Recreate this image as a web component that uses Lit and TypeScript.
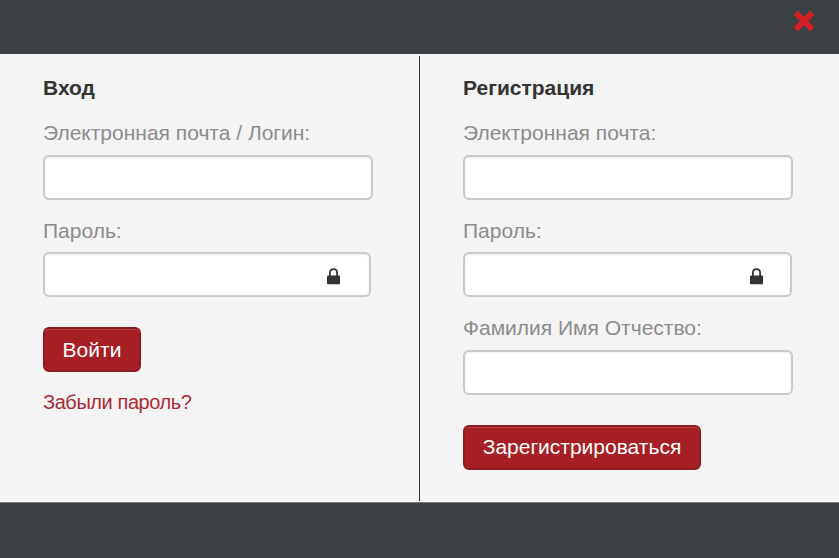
import { LitElement, html, css, svg } from "lit";
import { customElement, property } from "lit/decorators.js";

const lock = html`<svg class="lock" viewBox="0 0 13 17" width="13" height="17">${svg`
  <path d="M2.9 8.4V4.8C2.9 2.6 4.4 1.1 6.5 1.1S10.1 2.6 10.1 4.8V8.4" fill="none" stroke="#333" stroke-width="1.8"/>
  <rect x="0" y="7.4" width="13" height="8.8" rx="1" fill="#333"/>`}</svg>`;

@customElement("form-field")
class FormField extends LitElement {
  @property() label = "";
  @property({ type: Boolean }) secret = false;

  static styles = css`
    :host { display: block; }
    .label { display: block; height: 24px; line-height: 24px; margin-bottom: 10px; color: #8b8b8b; white-space: nowrap; }
    .label.secret { margin-bottom: 9px; }
    .box { display: flex; position: relative; width: 330px; height: 45px; }
    .box.secret { width: var(--secret-width, 328px); }
    .input { box-sizing: border-box; width: 100%; height: 45px; margin: 0; padding: 0 16px; border: 2px solid #c9c9c9; border-radius: 6px; background: #fff; box-shadow: inset 0 1px 2px #ececec; font: inherit; color: #333; outline: none; }
    .lock { position: absolute; right: var(--lock-right, 31px); top: 16px; }
  `;

  render() {
    const kind = this.secret ? "secret" : "";
    return html`<label class="label ${kind}" for="input">${this.label}</label>
      <div class="box ${kind}">
        <input class="input" id="input" type=${this.secret ? "password" : "text"} />
        ${this.secret ? lock : ""}
      </div>`;
  }
}

@customElement("app-root")
class AppRoot extends LitElement {
  static styles = css`
    :host { display: flex; flex-direction: column; box-sizing: border-box; width: 839px; height: 558px; background: #3b4042; font: 21px "Liberation Sans", Arial, sans-serif; overflow: hidden; }
    .top { display: flex; justify-content: flex-end; height: 54px; flex: none; }
    .close { width: 22px; height: 22px; margin: 10px 24px 0 0; padding: 0; border: 0; background: none; }
    .close svg { display: block; }
    .body { display: flex; height: 447px; flex: none; background: #f4f4f4; border-bottom: 1px solid #fff; }
    .side { box-sizing: border-box; padding: 20px 0 0 43px; display: flex; flex-direction: column; align-items: flex-start; width: 419px; }
    .login { --lock-right: 31px; }
    .signup { --lock-right: 29px; --secret-width: 329px; }
    .divider { width: 1px; height: 445px; margin-top: 2px; background: #303030; }
    .title { margin: 0 0 20px; font-size: 21px; line-height: 28px; font-weight: bold; color: #333; }
    .fields { display: flex; flex-direction: column; gap: 19px; margin-top: -1px; }
    .button { box-sizing: border-box; height: 45px; margin: 30px 0 0; padding: 0; border: 2px solid #8a1c22; border-radius: 6px; background: #a61f24; color: #fff; font: inherit; line-height: 24px; white-space: nowrap; box-shadow: inset 0 1px 0 #b64246; }
    .enter { width: 98px; padding-top: 1px; }
    .register { width: 238px; padding-bottom: 1px; }
    .forgot { margin-top: 18px; font-size: 20px; letter-spacing: -0.42px; line-height: 24px; color: #aa2b34; text-decoration: none; white-space: nowrap; }
    .foot { flex: 1; border-top: 1px solid #777b7c; }
  `;

  render() {
    return html`
      <header class="top">
        <button class="close" aria-label="Закрыть">
          <svg viewBox="0 0 22 22" width="22" height="22"><path d="M4.9 .6 11 6.7 17.1 .6 21.4 4.9 15.3 11 21.4 17.1 17.1 21.4 11 15.3 4.9 21.4 .6 17.1 6.7 11 .6 4.9Z" fill="#d22027"/></svg>
        </button>
      </header>
      <main class="body">
        <section class="side login">
          <h2 class="title">Вход</h2>
          <div class="fields">
            <form-field label="Электронная почта / Логин:"></form-field>
            <form-field label="Пароль:" secret></form-field>
          </div>
          <button class="button enter">Войти</button>
          <a class="forgot" href="#">Забыли пароль?</a>
        </section>
        <div class="divider"></div>
        <section class="side signup">
          <h2 class="title">Регистрация</h2>
          <div class="fields">
            <form-field label="Электронная почта:"></form-field>
            <form-field label="Пароль:" secret></form-field>
            <form-field label="Фамилия Имя Отчество:"></form-field>
          </div>
          <button class="button register">Зарегистрироваться</button>
        </section>
      </main>
      <footer class="foot"></footer>`;
  }
}
